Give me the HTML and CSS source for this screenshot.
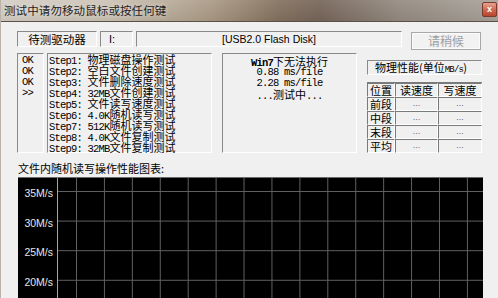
FILE: index.html
```html
<!DOCTYPE html>
<html lang="zh-CN">
<head>
<meta charset="utf-8">
<title>测试中请勿移动鼠标或按任何键</title>
<link rel="stylesheet" href="styles.css">
</head>
<body>
<div class="window">
  <div class="titlebar">
    <span class="title-text">测试中请勿移动鼠标或按任何键</span>
    <span class="close">x</span>
  </div>
  <div class="client">
    <div class="row1">
      <div class="sunken drv">待测驱动器</div>
      <div class="sunken letter">I:</div>
      <div class="sunken dname">[USB2.0 Flash Disk]</div>
      <div class="btn">请稍候</div>
    </div>
    <div class="row2">
      <div class="sunken status">
        <div class="ln mono">OK</div>
        <div class="ln mono">OK</div>
        <div class="ln mono">OK</div>
        <div class="ln mono">&gt;&gt;</div>
      </div>
      <div class="sunken steps">
        <div class="ln"><span class="mono">Step1: </span>物理磁盘操作测试</div>
        <div class="ln"><span class="mono">Step2: </span>空白文件创建测试</div>
        <div class="ln"><span class="mono">Step3: </span>文件删除速度测试</div>
        <div class="ln"><span class="mono">Step4: 32MB</span>文件创建测试</div>
        <div class="ln"><span class="mono">Step5: </span>文件读写速度测试</div>
        <div class="ln"><span class="mono">Step6: 4.0K</span>随机读写测试</div>
        <div class="ln"><span class="mono">Step7: 512K</span>随机读写测试</div>
        <div class="ln"><span class="mono">Step8: 4.0K</span>文件复制测试</div>
        <div class="ln"><span class="mono">Step9: 32MB</span>文件复制测试</div>
      </div>
      <div class="sunken mid">
        <div class="ln"><span class="mono bold">Win7</span>下无法执行</div>
        <div class="ln mono">0.88 ms/file</div>
        <div class="ln mono">2.28 ms/file</div>
        <div class="ln"><span class="mono">...</span>测试中<span class="mono">...</span></div>
      </div>
      <div class="right">
        <div class="sunken phys">物理性能(单位<span class="mono small">MB/s</span>)</div>
        <div class="table">
          <div class="cell">位置</div><div class="cell">读速度</div><div class="cell">写速度</div>
          <div class="cell">前段</div><div class="cell dots">...</div><div class="cell dots">...</div>
          <div class="cell">中段</div><div class="cell dots">...</div><div class="cell dots">...</div>
          <div class="cell">末段</div><div class="cell dots">...</div><div class="cell dots">...</div>
          <div class="cell">平均</div><div class="cell dots">...</div><div class="cell dots">...</div>
        </div>
      </div>
    </div>
    <div class="chart-title">文件内随机读写操作性能图表:</div>
    <div class="chart">
      <div class="ylabels">
        <div class="yl">35M/s</div>
        <div class="yl">30M/s</div>
        <div class="yl">25M/s</div>
        <div class="yl">20M/s</div>
      </div>
      <div class="plot"></div>
    </div>
  </div>
</div>
</body>
</html>
```
FILE: styles.css
```css
html, body {
  margin: 0;
  padding: 0;
}
body {
  width: 498px;
  height: 298px;
  overflow: hidden;
  background: #f0f0f0;
  font-family: "Noto Sans CJK SC", "Liberation Sans", sans-serif;
  color: #000;
}
.window {
  width: 498px;
  height: 298px;
  box-sizing: border-box;
  border-left: 1px solid #b9b3ab;
}
.titlebar {
  height: 21px;
  border-bottom: 1px solid #5a5046;
  display: flex;
  justify-content: space-between;
  align-items: flex-start;
  padding-left: 3px;
  background:
    linear-gradient(180deg, rgba(255,255,255,0.08), rgba(0,0,0,0.05)),
    linear-gradient(90deg, #d4cec5 0%, #cbc2b4 22%, #ab9b86 42%, #84715e 56%, #76655a 64%, #948a80 80%, #aaa39b 100%);
}
.title-text {
  font-size: 11.5px;
  line-height: 20px;
  color: #222;
  letter-spacing: 0.1px;
  text-shadow: 0 0 4px rgba(255,255,255,0.7);
}
.close {
  width: 15px;
  height: 15px;
  margin-top: 2px;
  margin-right: 1px;
  background: linear-gradient(180deg, #e8a292 0%, #d06a52 50%, #b8442c 100%);
  border: 1px solid #7a3a2c;
  border-radius: 2px;
  box-sizing: border-box;
  color: #fff;
  font-family: "Liberation Sans", sans-serif;
  font-weight: bold;
  font-size: 9px;
  line-height: 12px;
  text-align: center;
}
.client {
  padding: 9px 0 0 16px;
}
.sunken {
  box-sizing: border-box;
  border-style: solid;
  border-width: 1px;
  border-color: #8a8a8a #ffffff #ffffff #8a8a8a;
}
.row1 {
  display: flex;
  align-items: flex-start;
  height: 19px;
}
.drv, .letter, .dname {
  height: 16px;
  font-size: 11px;
  line-height: 14px;
  text-align: center;
}
.drv {
  width: 80px;
  font-size: 11.5px;
}
.letter {
  width: 33px;
  margin-left: 3px;
  text-align: left;
  padding-left: 8px;
  font-family: "Liberation Sans", sans-serif;
}
.dname {
  width: 266px;
  margin-left: 3px;
  font-family: "Liberation Sans", sans-serif;
  font-size: 10.5px;
}
.btn {
  width: 70px;
  height: 18px;
  margin-left: 9px;
  margin-top: 1px;
  box-sizing: border-box;
  border: 1px solid #a8a8a8;
  box-shadow: inset 0 0 0 1px #fbfbfb;
  background: #f2f2f2;
  color: #9f9f9f;
  font-size: 12px;
  line-height: 16px;
  text-align: center;
}
.row2 {
  display: flex;
  margin-top: 3px;
  height: 100px;
}
.ln {
  height: 11px;
  line-height: 11px;
  font-size: 11px;
  white-space: nowrap;
}
.mono {
  font-family: "Liberation Mono", monospace;
  font-size: 10.5px;
  letter-spacing: -0.8px;
}
.bold {
  font-weight: bold;
}
.small {
  font-size: 9px;
}
.status {
  width: 27px;
  padding: 1px 0 0 4px;
}
.steps {
  width: 165px;
  margin-left: 3px;
  padding: 0 0 0 1px;
}
.mid {
  width: 135px;
  margin-left: 10px;
  padding-top: 2px;
  text-align: center;
}
.right {
  width: 115px;
  margin-left: 10px;
}
.phys {
  margin-top: 7px;
  height: 15px;
  font-size: 11px;
  line-height: 13px;
  padding-left: 7px;
  white-space: nowrap;
}
.table {
  margin-top: 7px;
  display: grid;
  grid-template-columns: 28px 43px 44px;
  grid-auto-rows: 14px;
  border-top: 1px solid #7a7a7a;
}
.cell {
  box-sizing: border-box;
  border-style: solid;
  border-width: 1px;
  border-color: #7a7a7a #ffffff #ffffff #7a7a7a;
  font-size: 11px;
  line-height: 12px;
  text-align: center;
  white-space: nowrap;
  overflow: hidden;
}
.dots {
  font-family: "Liberation Sans", sans-serif;
  font-size: 9px;
  color: #6a6a6a;
  line-height: 10px;
}
.chart-title {
  margin-top: 8px;
  height: 14px;
  font-size: 11px;
  line-height: 14px;
  padding-left: 1px;
}
.chart {
  margin-top: 2px;
  margin-left: 1px;
  width: 465px;
  height: 130px;
  background: #000;
  display: flex;
  border-top: 1px solid #6a6a6a;
  box-sizing: border-box;
}
.ylabels {
  width: 39px;
  padding-top: 1px;
  box-sizing: border-box;
}
.yl {
  height: 29.6px;
  line-height: 29.6px;
  padding-right: 4px;
  text-align: right;
  font-family: "Liberation Sans", sans-serif;
  font-size: 10.5px;
  color: #e6e6e6;
}
.plot {
  flex: 1;
  border-left: 1px solid #a5a5a5;
  background-color: #000;
  background-image:
    linear-gradient(90deg, #606060 1px, transparent 1px),
    linear-gradient(180deg, #606060 1px, transparent 1px);
  background-size: 27.93px 100%, 100% 29.6px;
  background-position: 18px 0, 0 13px;
}
```
